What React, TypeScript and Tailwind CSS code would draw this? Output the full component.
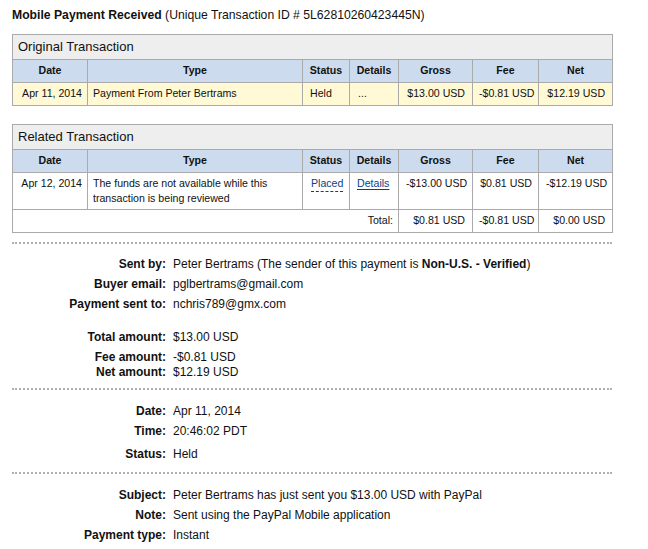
import React from "react";

const F = { fontFamily: '"Liberation Sans", Arial, sans-serif' };

function Label({ children }: { children: React.ReactNode }) {
  return <div className="w-[154px] shrink-0 text-right font-bold">{children}</div>;
}

function Row({ label, children, h = "h-[20px]", extra = "" }: { label: string; children: React.ReactNode; h?: string; extra?: string }) {
  return (
    <div className={`flex items-center gap-[7px] ${h} ${extra}`}>
      <Label>{label}</Label>
      <div className="whitespace-nowrap">{children}</div>
    </div>
  );
}

const td = "border border-[#aaaaaa] px-[5px] whitespace-nowrap";

function Cols() {
  return (
    <colgroup>
      <col className="w-[75px]" />
      <col className="w-[215px]" />
      <col className="w-[47px]" />
      <col className="w-[49px]" />
      <col className="w-[74px]" />
      <col className="w-[66px]" />
      <col className="w-[74px]" />
    </colgroup>
  );
}

function Header({ title }: { title: string }) {
  return (
    <>
      <tr className="h-[25px]">
        <td colSpan={7} className={`${td} bg-[#eeeeee] text-[13px] px-[4px] align-middle`}>
          {title}
        </td>
      </tr>
      <tr className="h-[23px] bg-[#ccdcee] font-bold text-center">
        <td className={td}>Date</td>
        <td className={td}>Type</td>
        <td className={`${td} px-[1px]`}>Status</td>
        <td className={`${td} px-[1px]`}>Details</td>
        <td className={td}>Gross</td>
        <td className={td}>Fee</td>
        <td className={td}>Net</td>
      </tr>
    </>
  );
}

export default function App() {
  return (
    <div style={F} className="bg-white text-[#111] w-[648px] h-[549px] overflow-hidden pl-[12px] text-[12px]">
      <div className="pt-[7px] h-[34px] text-[12.2px] leading-[16px] whitespace-nowrap">
        <span className="font-bold">Mobile Payment Received</span> (Unique Transaction ID # 5L62810260423445N)
      </div>

      <table className="table-fixed border-collapse w-[600px] text-[10.6px]">
        <Cols />
        <tbody>
          <Header title="Original Transaction" />
          <tr className="h-[23px] bg-[#fff9d5]">
            <td className={`${td} text-right px-[4px]`}>Apr 11, 2014</td>
            <td className={td}>Payment From Peter Bertrams</td>
            <td className={`${td} px-[7px]`}>Held</td>
            <td className={`${td} px-[8px]`}>...</td>
            <td className={`${td} text-right px-[7px]`}>$13.00 USD</td>
            <td className={`${td} text-right px-[6px]`}>-$0.81 USD</td>
            <td className={`${td} text-right px-[7px]`}>$12.19 USD</td>
          </tr>
        </tbody>
      </table>

      <div className="h-[18px]" />

      <table className="table-fixed border-collapse w-[600px] text-[10.6px]">
        <Cols />
        <tbody>
          <Header title="Related Transaction" />
          <tr className="h-[37px] align-top">
            <td className={`${td} text-right pt-[3px] px-[4px]`}>Apr 12, 2014</td>
            <td className="border border-[#aaaaaa] px-[5px] pt-[3px] leading-[15px]">The funds are not available while this transaction is being reviewed</td>
            <td className={`${td} px-[8px] pt-[3px]`}>
              <span className="text-[#0a3f86] border-b border-dashed border-[#0a3f86] pb-[2px]">Placed</span>
            </td>
            <td className={`${td} px-[7px] pt-[3px]`}>
              <span className="text-[#0a3f86] underline underline-offset-2">Details</span>
            </td>
            <td className={`${td} text-right px-[7px] pt-[3px]`}>-$13.00 USD</td>
            <td className={`${td} text-right px-[6px] pt-[3px]`}>$0.81 USD</td>
            <td className={`${td} text-right px-[7px] pt-[3px]`}>-$12.19 USD</td>
          </tr>
          <tr className="h-[23px]">
            <td colSpan={4} className={`${td} text-right`}>Total:</td>
            <td className={`${td} text-right px-[7px]`}>$0.81 USD</td>
            <td className={`${td} text-right px-[6px]`}>-$0.81 USD</td>
            <td className={`${td} text-right px-[7px]`}>$0.00 USD</td>
          </tr>
        </tbody>
      </table>

      <div className="mt-[9px] w-[600px] border-t-2 border-dotted border-[#b0b0b0]" />

      <div className="mt-[10px]">
        <Row label="Sent by:">
          Peter Bertrams (The sender of this payment is <span className="font-bold">Non-U.S. - Verified</span>)
        </Row>
        <Row label="Buyer email:">pglbertrams@gmail.com</Row>
        <Row label="Payment sent to:">nchris789@gmx.com</Row>
        <Row label="Total amount:" extra="mt-[13px]">$13.00 USD</Row>
        <Row label="Fee amount:">-$0.81 USD</Row>
        <Row label="Net amount:" h="h-[14px]" extra="-mt-[2px]">$12.19 USD</Row>
      </div>

      <div className="mt-[9px] w-[600px] border-t-2 border-dotted border-[#b0b0b0]" />

      <div className="mt-[11px]">
        <Row label="Date:">Apr 11, 2014</Row>
        <Row label="Time:">20:46:02 PDT</Row>
        <Row label="Status:" extra="mt-[3px]">Held</Row>
      </div>

      <div className="mt-[8px] w-[600px] border-t-2 border-dotted border-[#b0b0b0]" />

      <div className="mt-[11px]">
        <Row label="Subject:">Peter Bertrams has just sent you $13.00 USD with PayPal</Row>
        <Row label="Note:">Sent using the PayPal Mobile application</Row>
        <Row label="Payment type:">Instant</Row>
      </div>
    </div>
  );
}
